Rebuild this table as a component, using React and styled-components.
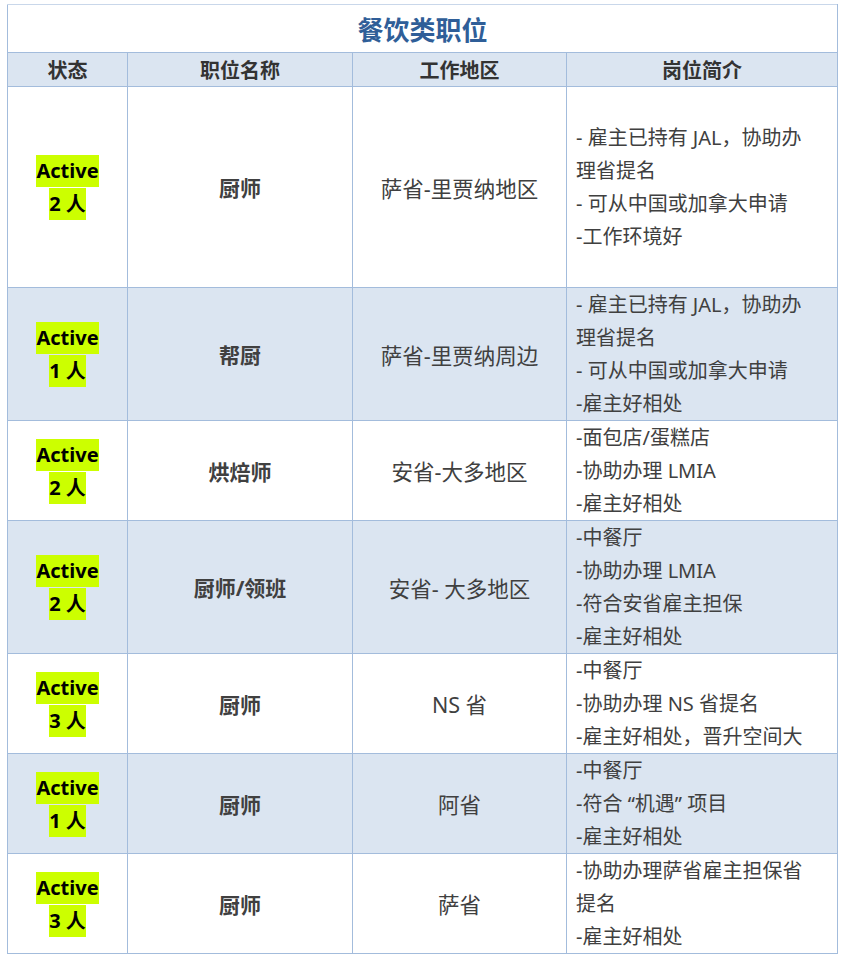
import React from 'react'
import styled, { createGlobalStyle } from 'styled-components'

const GlobalStyle = createGlobalStyle`
    body {
        margin: 0;
        background: #ffffff;
        font-family: "Noto Sans", "Noto Sans CJK SC", sans-serif;
    }
`

const Page = styled.div`
    padding: 4px 0 0 7px;
`

const Table = styled.table`
    width: 830px;
    table-layout: fixed;
    border-collapse: collapse;
    color: #404040;
`

const Cell = styled.td`
    border: 1px solid #a3bcdc;
    padding: 0;
    background: ${props => props.$shaded ? '#dbe5f1' : '#ffffff'};
    vertical-align: middle;
    text-align: center;
`

const TitleCell = styled(Cell)`
    height: 47px;
    font-size: 26px;
    font-weight: bold;
    color: #2f5e98;
    border-top-color: #c9d7ea;
`

const HeadCell = styled(Cell)`
    height: 33px;
    font-size: 20px;
    font-weight: bold;
    color: #333333;
    background: #dbe5f1;
`

const StatusCell = styled(Cell)`
    font-size: 20px;
    font-weight: bold;
    line-height: 33px;
    color: #000000;
`

const Mark = styled.span`
    display: inline-block;
    line-height: 32px;
    background: #ccff00;
`

const NameCell = styled(Cell)`
    font-size: 21px;
    font-weight: bold;
`

const AreaCell = styled(Cell)`
    font-size: 21.5px;
`

const IntroCell = styled(Cell)`
    text-align: left;
    padding: ${props => props.$pad || 0}px 0 ${props => props.$pad || 0}px 9px;
    font-size: 20px;
    line-height: 33px;
    white-space: nowrap;
`

const Line = styled.div`
    min-height: 33px;
`

const jobs = [
    {
        count: 2, name: '厨师', area: '萨省-里贾纳地区', pad: 1,
        lines: ['', '- 雇主已持有 JAL，协助办', '理省提名', '- 可从中国或加拿大申请', '-工作环境好', ''],
    },
    {
        count: 1, name: '帮厨', area: '萨省-里贾纳周边',
        lines: ['- 雇主已持有 JAL，协助办', '理省提名', '- 可从中国或加拿大申请', '-雇主好相处'],
    },
    {
        count: 2, name: '烘焙师', area: '安省-大多地区',
        lines: ['-面包店/蛋糕店', '-协助办理 LMIA', '-雇主好相处'],
    },
    {
        count: 2, name: '厨师/领班', area: '安省- 大多地区',
        lines: ['-中餐厅', '-协助办理 LMIA', '-符合安省雇主担保', '-雇主好相处'],
    },
    {
        count: 3, name: '厨师', area: 'NS 省',
        lines: ['-中餐厅', '-协助办理 NS 省提名', '-雇主好相处，晋升空间大'],
    },
    {
        count: 1, name: '厨师', area: '阿省',
        lines: ['-中餐厅', '-符合 “机遇” 项目', '-雇主好相处'],
    },
    {
        count: 3, name: '厨师', area: '萨省',
        lines: ['-协助办理萨省雇主担保省', '提名', '-雇主好相处'],
    },
]

const App = () => {
    return (
        <Page>
            <GlobalStyle />
            <Table>
                <colgroup>
                    <col style={{ width: 120 }} />
                    <col style={{ width: 225 }} />
                    <col style={{ width: 214 }} />
                    <col style={{ width: 271 }} />
                </colgroup>
                <tbody>
                    <tr>
                        <TitleCell colSpan={4}>餐饮类职位</TitleCell>
                    </tr>
                    <tr>
                        <HeadCell>状态</HeadCell>
                        <HeadCell>职位名称</HeadCell>
                        <HeadCell>工作地区</HeadCell>
                        <HeadCell>岗位简介</HeadCell>
                    </tr>
                    {jobs.map((job, i) => {
                        const shaded = i % 2 === 1
                        return (
                            <tr key={i}>
                                <StatusCell $shaded={shaded}>
                                    <Mark>Active</Mark><br />
                                    <Mark>{job.count} 人</Mark>
                                </StatusCell>
                                <NameCell $shaded={shaded}>{job.name}</NameCell>
                                <AreaCell $shaded={shaded}>{job.area}</AreaCell>
                                <IntroCell $shaded={shaded} $pad={job.pad}>
                                    {job.lines.map((line, j) => (
                                        <Line key={j}>{line || '\u00a0'}</Line>
                                    ))}
                                </IntroCell>
                            </tr>
                        )
                    })}
                </tbody>
            </Table>
        </Page>
    )
}

export default App
